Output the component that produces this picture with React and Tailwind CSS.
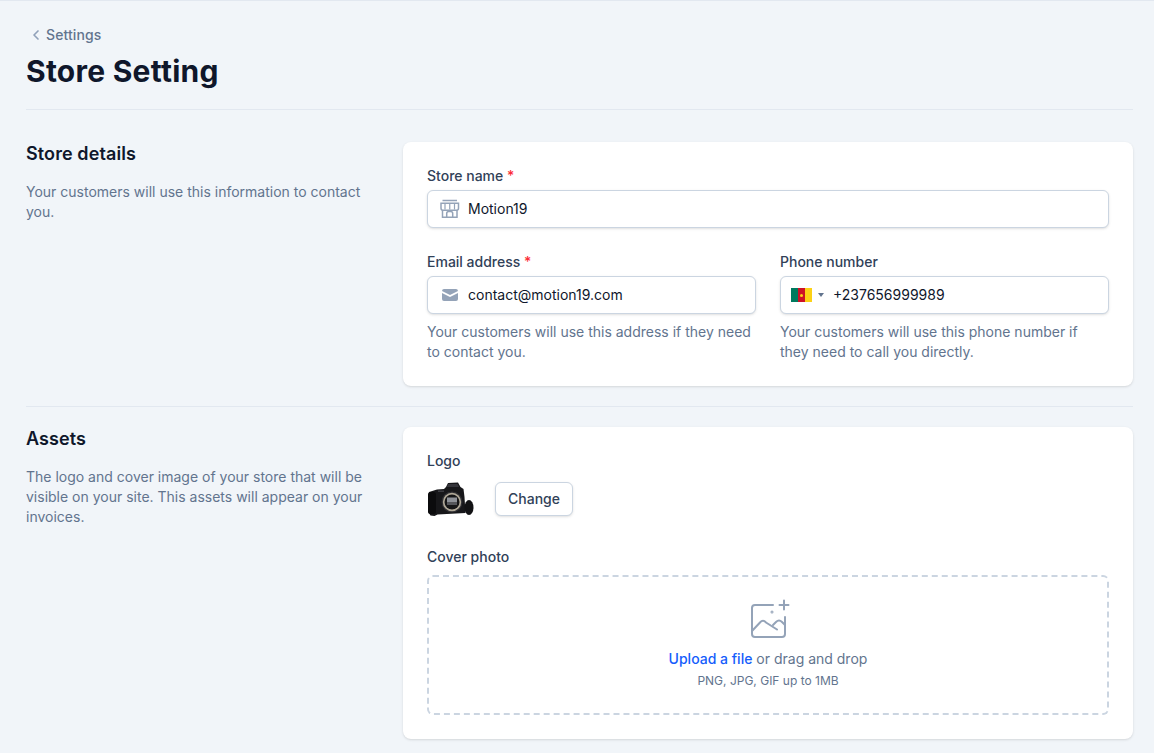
import { ChevronLeft } from 'lucide-react'

const StoreIcon = () => (
  <svg width="20" height="20" viewBox="0 0 20 20" fill="none" stroke="#94a3b8" strokeWidth="1.5" className="shrink-0">
    <path d="M2.500 1.500h14.500" />
    <path d="M1 4.200h17.500v5a2 2 0 0 1-2 2H3a2 2 0 0 1-2-2z" />
    <path d="M5 4.500V10.500M9.750 4.500V10.500M14.500 4.500V10.500" strokeWidth="1.200" />
    <path d="M2.500 11v7.200h14.500V11" />
    <path d="M6.700 18.200v-3.700a2 2 0 0 1 2-2h2a2 2 0 0 1 2 2v3.700" />
  </svg>
)

const MailIcon = () => (
  <svg width="20" height="20" viewBox="0 0 20 20" fill="#94a3b8" className="shrink-0">
    <path d="M2.003 5.884 10 9.882l7.997-3.998A2 2 0 0 0 16 4H4a2 2 0 0 0-1.997 1.884z" />
    <path d="m18 8.118-8 4-8-4V14a2 2 0 0 0 2 2h12a2 2 0 0 0 2-2V8.118z" />
  </svg>
)

const CameraPic = () => (
  <svg width="48" height="36" viewBox="0 0 48 36">
    <circle cx="24" cy="18" r="23" fill="#ffffff" />
    <path d="M2 11 10 8.500 17 8l2-2 2-4 10-.5 2.500 4.500 3 2 1 8 1 16-28 1.500-3 1.500-4-.5-2-3-.5-12z" fill="#17171a" />
    <path d="M21 3h9.500l1.500 3H20z" fill="#34343a" />
    <rect x="1" y="11" width="8" height="22" rx="2.500" fill="#0b0b0d" />
    <rect x="11" y="9.500" width="6" height="1.500" fill="#3c3c42" />
    <circle cx="25" cy="21" r="10.500" fill="#2e2e32" />
    <circle cx="25" cy="21" r="9.200" fill="#b0a898" />
    <circle cx="25" cy="21" r="7.500" fill="#161618" />
    <rect x="20" y="16.500" width="10" height="7.500" fill="#8e9198" />
    <rect x="20" y="21" width="10" height="3" fill="#55565b" />
    <ellipse cx="42" cy="26.500" rx="4.500" ry="7.500" fill="#121214" />
  </svg>
)

const CoverIcon = () => (
  <svg width="40" height="40" viewBox="0 0 40 40" fill="none" stroke="#94a3b8" strokeWidth="2" strokeLinecap="round" strokeLinejoin="round" className="overflow-visible">
    <path d="M25 6H7a3 3 0 0 0-3 3v26a3 3 0 0 0 3 3h27a3 3 0 0 0 3-3V18" />
    <path d="M4 32l8-8.500c2-2.200 4-2.200 6 0l11 7" />
    <path d="M25 26l3-3c2-2 4-2 6 0l3 3" />
    <path d="M36 1.500v9M31.500 6h9" />
    <circle cx="24" cy="13" r=".5" />
  </svg>
)

const Label = ({ children, required }) => (
  <div className="text-sm font-medium text-slate-700 leading-5">
    {children}
    {required && <span className="text-red-500"> *</span>}
  </div>
)

const inputBox = 'mt-1 flex h-[38px] items-center rounded-md border border-[#cbd5e1] bg-white pl-3 text-sm text-slate-900 shadow-sm'

export default function App() {
  return (
    <div className="h-[753px] overflow-hidden border-t border-[#e2e8f0] bg-[#f1f5f9] px-[26px] pr-[21px] pt-6 font-['Inter',sans-serif]">
      <div className="flex items-center gap-0.5 pl-[3px] text-sm font-medium leading-5 tracking-[0.1px] text-slate-500">
        <ChevronLeft size={16} className="-ml-[1px] text-slate-400" strokeWidth={2.5} />
        Settings
      </div>
      <h1 className="mt-2 text-3xl font-bold leading-9 tracking-[0.25px] text-slate-900">Store Setting</h1>

      <div className="mt-[20px] border-t border-[#e2e8f0]" />

      <section className="mt-8 flex">
        <div className="w-[377px] shrink-0 pr-[30px]">
          <h2 className="text-lg font-semibold leading-6 tracking-[0.1px] text-slate-900">Store details</h2>
          <p className="mt-[16px] text-sm leading-5 text-slate-500">
            Your customers will use this information to contact you.
          </p>
        </div>
        <div className="w-[730px] rounded-lg bg-white p-6 shadow">
          <Label required>Store name</Label>
          <div className={inputBox}>
            <StoreIcon />
            <span className="ml-2">Motion19</span>
          </div>

          <div className="mt-6 grid grid-cols-2 gap-6">
            <div>
              <Label required>Email address</Label>
              <div className={inputBox}>
                <MailIcon />
                <span className="ml-2">contact@motion19.com</span>
              </div>
              <p className="mt-2 text-sm leading-5 text-slate-500">
                Your customers will use this address if they need to contact you.
              </p>
            </div>
            <div>
              <Label>Phone number</Label>
              <div className={inputBox}>
                <span className="flex h-[14px] w-[21px] shrink-0 -ml-[2px]">
                  <span className="w-1/3 bg-[#007a5e]" />
                  <span className="flex w-1/3 items-center justify-center bg-[#ce1126]">
                    <span className="h-[3px] w-[3px] rounded-full bg-[#fcd116]" />
                  </span>
                  <span className="w-1/3 bg-[#fcd116]" />
                </span>
                <span className="ml-[6px] h-0 w-0 border-x-[3px] border-t-[4px] border-x-transparent border-t-slate-500" />
                <span className="ml-[9px]">+237656999989</span>
              </div>
              <p className="mt-2 text-sm leading-5 text-slate-500">
                Your customers will use this phone number if they need to call you directly.
              </p>
            </div>
          </div>
        </div>
      </section>

      <div className="mt-5 border-t border-[#e2e8f0]" />

      <section className="mt-5 flex">
        <div className="w-[377px] shrink-0 pr-[12px]">
          <h2 className="text-lg font-semibold leading-6 tracking-[0.1px] text-slate-900">Assets</h2>
          <p className="mt-[16px] text-sm leading-5 text-slate-500">
            The logo and cover image of your store that will be visible on your site. This assets will appear on your invoices.
          </p>
        </div>
        <div className="w-[730px] rounded-lg bg-white px-6 pb-6 pt-6 shadow">
          <Label>Logo</Label>
          <div className="mt-[10px] flex items-center">
            <div className="w-12"><CameraPic /></div>
            <button className="ml-5 h-[34px] rounded-md border border-[#cbd5e1] bg-white px-3 text-sm font-medium text-slate-700 shadow-sm">
              Change
            </button>
          </div>

          <div className="mt-[30px]">
            <Label>Cover photo</Label>
          </div>
          <div className="mt-2 flex h-[140px] flex-col items-center rounded-md border-2 border-dashed border-[#cbd5e1] pt-[22px]">
            <CoverIcon />
            <p className="mt-[10px] text-sm leading-5 text-slate-500">
              <span className="font-medium text-blue-600">Upload a file</span> or drag and drop
            </p>
            <p className="mt-1 text-xs leading-4 text-slate-500">PNG, JPG, GIF up to 1MB</p>
          </div>
        </div>
      </section>
    </div>
  )
}
